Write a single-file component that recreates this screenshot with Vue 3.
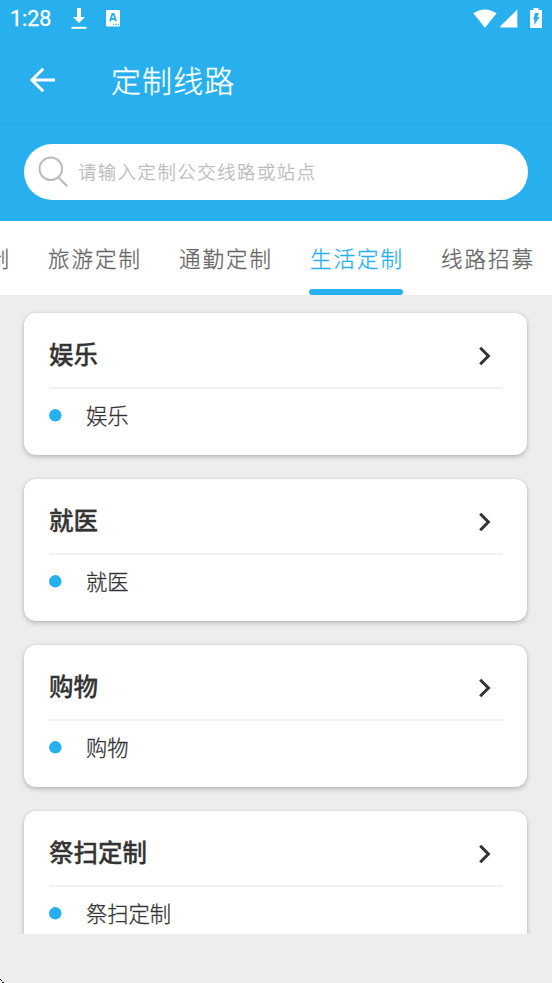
<script setup>
const tabs = [
  { label: '节日定制' },
  { label: '旅游定制' },
  { label: '通勤定制' },
  { label: '生活定制', active: true },
  { label: '线路招募' },
]
const groups = ['娱乐', '就医', '购物', '祭扫定制']
</script>

<template>
  <div class="screen">
    <header class="top">
      <div class="status">
        <span class="time">1:28</span>
        <svg class="download" width="16" height="22" viewBox="0 0 16 22">
          <path d="M6 0h4v9h4l-6 6-6-6h4z" fill="#fff" />
          <path d="M.5 18.800h15v2H.5z" fill="#fff" />
        </svg>
        <svg class="keyboard" width="14" height="17" viewBox="0 0 14 17">
          <rect width="14" height="16.500" rx="1.200" fill="#fff" />
          <path d="M4 11.300 6.400 4h1.300L10 11.300M4.800 9h4.400" fill="none" stroke="#28afed" stroke-width="1.800" />
          <path d="M7 14.300h1.400M9.300 14.300h1.400M11.600 14.300H13" stroke="#28afed" />
        </svg>
        <span class="spacer"></span>
        <svg class="wifi" width="24" height="19" viewBox="0 0 24 19">
          <path d="M.3 4.200Q11.800-3.400 23.600 4.200L12 18.700z" fill="#fff" />
        </svg>
        <svg class="signal" width="18" height="19" viewBox="0 0 18 19">
          <path d="M17.300.5V18.500H.3V17.200z" fill="#fff" />
        </svg>
        <svg class="battery" width="12" height="20" viewBox="0 0 12 20">
          <path d="M3.500 0h5v2H11q1 0 1 1v16q0 1-1 1H1q-1 0-1-1V3q0-1 1-1h2.500z" fill="#fff" />
          <path d="M5 5h4L7.300 9H9.500L4.400 17V11.500H3.200z" fill="#28afed" />
        </svg>
      </div>
      <div class="bar">
        <svg width="26" height="26" viewBox="0 0 26 26">
          <path d="M25 13H2.200M13.200 1.700 1.900 13l11.300 11.300" fill="none" stroke="#fff" stroke-width="3" />
        </svg>
        <h1>定制线路</h1>
      </div>
      <div class="search-wrap">
        <div class="search">
          <svg width="31" height="32" viewBox="0 0 31 32">
            <circle cx="12.800" cy="12.800" r="11.300" fill="none" stroke="#bbb" stroke-width="2" />
            <path d="m20.500 21.500 8.700 8.800" stroke="#bbb" stroke-width="2.200" />
          </svg>
          <span>请输入定制公交线路或站点</span>
        </div>
      </div>
    </header>
    <nav class="tabs">
      <div v-for="tab in tabs" :key="tab.label" class="tab" :class="{ active: tab.active }">{{ tab.label }}</div>
    </nav>
    <main class="list">
      <section v-for="name in groups" :key="name" class="card">
        <div class="head">
          <h2>{{ name }}</h2>
          <svg width="14" height="20" viewBox="0 0 14 20">
            <path d="m2.200 1.700 8.200 8.300-8.200 8.300" fill="none" stroke="#333" stroke-width="3" />
          </svg>
        </div>
        <div class="item">
          <svg width="13" height="13" viewBox="0 0 13 13"><circle cx="6.300" cy="6.300" r="6.250" fill="#28afed" /></svg>
          <span>{{ name }}</span>
        </div>
      </section>
    </main>
    <svg class="corner" width="4" height="4" viewBox="0 0 4 4" shape-rendering="crispEdges">
      <path d="M0 0h1v1H0zM1 1h1v1H1zM2 3h2v1H2z" fill="#111" />
    </svg>
  </div>
</template>

<style>
body { margin: 0; }
</style>

<style scoped>
.screen {
  position: relative;
  width: 552px;
  height: 983px;
  overflow: hidden;
  background: #ededed;
  font-family: "Noto Sans CJK SC", sans-serif;
  font-weight: 300;
  -webkit-text-stroke: .3px currentColor;
  color: #333;
}
svg { display: block; flex: none; }
.top { height: 221px; background: #28afed; color: #fff; }
.status { height: 37px; display: flex; align-items: center; padding: 0 10px 0 10px; box-sizing: border-box; }
.time { font: 400 21.500px/38px Roboto, sans-serif; width: 61px; padding-top: 1px; }
.download { margin-right: 19px; }
.spacer { flex: 1; }
.wifi { margin-right: 3px; }
.signal { margin-right: 1px; }
.battery { margin-left: 11px; margin-top: -1px; }
.bar {
  height: 87px;
  box-sizing: border-box;
  border-bottom: 1px solid #28a4de;
  padding: 0 0 0 30px;
  display: flex;
  align-items: center;
}
h1 { margin: -3px 0 0 55px; font-size: 30px; font-weight: 300; letter-spacing: 1.100px; line-height: 44px; }
.search-wrap { padding: 20px 24.500px 0 24.400px; }
.search {
  height: 55.500px;
  border-radius: 28px;
  background: #fff;
  display: flex;
  align-items: center;
  padding-left: 13.500px;
  color: #bbb;
  font-size: 18.400px;
  letter-spacing: 1.500px;
}
.search span { margin: -1px 0 0 9px; }
.tabs {
  height: 74px;
  background: #fff;
  display: flex;
  justify-content: flex-end;
  gap: 37px;
  padding-right: 18px;
  box-sizing: border-box;
  overflow: hidden;
}
.tab {
  flex: none;
  width: 94px;
  height: 74px;
  box-sizing: border-box;
  text-indent: 1px;
  font-size: 21.500px;
  letter-spacing: 2px;
  line-height: 73px;
  color: #666;
  white-space: nowrap;
}
.tab.active { color: #28afed; }
.tab.active::after {
  content: "";
  display: block;
  height: 6px;
  margin-top: -5px;
  border-radius: 3px;
  background: #28afed;
}
.list { height: 639px; overflow: hidden; box-sizing: border-box; padding: 18px 24.600px 0 24.400px; }
.card {
  height: 142px;
  box-sizing: border-box;
  margin-bottom: 24px;
  padding: 0 24.500px;
  border-radius: 12px;
  background: #fff;
  box-shadow: 0 2px 5px rgba(0, 0, 0, .22), 0 0 2px rgba(0, 0, 0, .1);
}
.head {
  height: 76px;
  box-sizing: border-box;
  border-bottom: 2px solid #f0f0f0;
  display: flex;
  align-items: center;
  justify-content: space-between;
  padding: 12px 11px 0 0;
}
h2 { margin: -4px 0 0; font-size: 24.500px; font-weight: 500; line-height: 36px; }
.item { height: 53px; display: flex; align-items: center; font-size: 21.300px; }
.item span { margin: -2px 0 0 24px; }
.corner { position: absolute; left: 0; bottom: 0; }
</style>
